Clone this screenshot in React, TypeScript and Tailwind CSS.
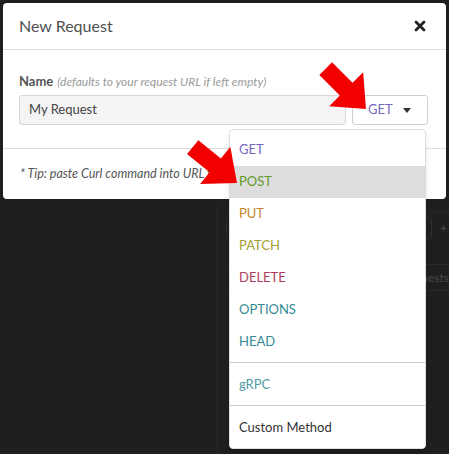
import React from 'react'

const methods = [
  { name: 'GET', color: 'text-[#7566bd]' },
  { name: 'POST', color: 'text-[#629b26]', active: true },
  { name: 'PUT', color: 'text-[#c4862a]' },
  { name: 'PATCH', color: 'text-[#a29e30]' },
  { name: 'DELETE', color: 'text-[#ae3b5c]' },
  { name: 'OPTIONS', color: 'text-[#348a94]' },
  { name: 'HEAD', color: 'text-[#348a94]' },
]

function Arrow({ x, y, angle }: { x: number; y: number; angle: number }) {
  // tip sits at (0,0), body extends back along -x
  return (
    <g transform={`translate(${x} ${y}) rotate(${angle})`}>
      <polygon points="0,0 -28,-24 -28,-9 -57,-9 -57,9 -28,9 -28,24" fill="#f20000" />
    </g>
  )
}

function MenuItem({ name, color, active }: { name: string; color: string; active?: boolean }) {
  return (
    <div className={`h-[32px] flex items-center pl-[9px] text-[13px] ${color} ${active ? 'bg-[#dddddd]' : ''}`}>
      {name}
    </div>
  )
}

export default function App() {
  return (
    <div className="relative w-[449px] h-[454px] overflow-hidden bg-[#1f1f1f] font-['Lato','Noto_Sans',sans-serif]">
      {/* app behind the modal */}
      <div className="flex h-full pt-[205px]">
        <div className="w-[218px] border-r border-[#2a2a2a]" />
        <div className="flex-1 flex flex-col pl-[8px]">
          <div className="border-b border-[#262626] h-[8px]" />
          <div className="flex items-center gap-[8px] mt-[4px]">
            <div className="flex-1 h-[22px] border border-[#303030] rounded-[3px] flex items-center justify-end pr-[4px] text-[11px] text-[#4a4a4a]">⊃</div>
            <span className="text-[12px] text-[#4a4a4a] pr-[2px]">+</span>
          </div>
          <div className="border-b border-[#2a2a2a] h-[26px]" />
          <div className="h-[26px] border-b border-[#2a2a2a] flex items-center justify-end text-[12px] text-[#484848]">
            Requests
          </div>
        </div>
      </div>

      {/* modal */}
      <div className="absolute left-[3px] top-[3px] w-[443px] h-[196px] bg-white rounded-[4px] flex flex-col">
        <div className="h-[47px] shrink-0 flex items-center justify-between pl-[16px] pr-[20px] border-b border-[#dcdcdc]">
          <span className="text-[16px] text-[#505050]">New Request</span>
          <svg width="12" height="12" viewBox="0 0 12 12">
            <path d="M2 2 L10 10 M10 2 L2 10" stroke="#222" strokeWidth="2.8" strokeLinecap="round" />
          </svg>
        </div>
        <div className="pl-[16px] pr-[18px] pt-[23px] pb-[23px] border-b border-[#dcdcdc]">
          <div className="h-[18px] flex items-center gap-[4px] mb-[4px]">
            <span className="text-[13px] font-bold text-[#555]">Name</span>
            <span className="text-[12px] italic text-[#9a9a9a]">(defaults to your request URL if left empty)</span>
          </div>
          <div className="flex gap-[6px]">
            <div className="flex-1 h-[30px] bg-[#f4f4f4] border border-[#d6d6d6] rounded-[3px] flex items-center pl-[9px] text-[13px] text-[#444]">
              My Request
            </div>
            <div className="w-[76px] h-[30px] border border-[#cfcfcf] rounded-[3px] flex items-center pl-[15px] gap-[10px]">
              <span className="text-[13px] text-[#7566bd]">GET</span>
              <svg width="8" height="5" viewBox="0 0 8 5">
                <path d="M0 0 L8 0 L4 5 Z" fill="#333" />
              </svg>
            </div>
          </div>
        </div>
        <div className="flex-1 flex items-center pl-[17px] text-[12.5px] italic text-[#555]">
          * Tip: paste Curl command into URL field
        </div>
      </div>

      {/* method dropdown */}
      <div className="absolute left-[229px] top-[129px] w-[197px] bg-white border border-[#dedede] rounded-[4px] py-[4px] shadow-md">
        {methods.map(m => (
          <MenuItem key={m.name} name={m.name} color={m.color} active={m.active} />
        ))}
        <div className="mt-[4px] mb-[6px] border-t border-[#c8c8c8]" />
        <MenuItem name="gRPC" color="text-[#529ba4]" />
        <div className="mt-[4px] mb-[6px] border-t border-[#c8c8c8]" />
        <MenuItem name="Custom Method" color="text-[#333]" />
      </div>

      {/* pointer arrows */}
      <svg className="absolute inset-0 pointer-events-none" width="449" height="454" viewBox="0 0 449 454">
        <Arrow x={366} y={109} angle={45} />
        <Arrow x={237} y={183} angle={39} />
      </svg>
    </div>
  )
}
